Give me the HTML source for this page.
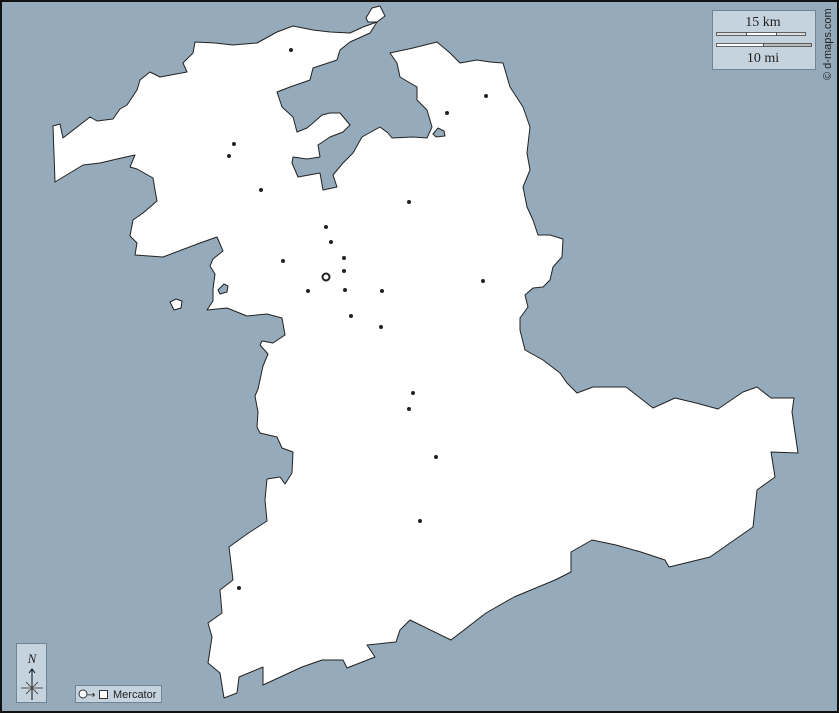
<!DOCTYPE html>
<html><head><meta charset="utf-8"><style>
html,body{margin:0;padding:0;background:#95abbb;}
svg{display:block;}
</style></head><body>
<svg width="839" height="713" viewBox="0 0 839 713" xmlns="http://www.w3.org/2000/svg">
<rect x="0" y="0" width="839" height="713" fill="#95abbb"/>
<g fill="#ffffff" stroke="#222" stroke-width="1" stroke-linejoin="round">
<polygon points="53,126 60,124 63,138 90,117 97,121 113,119 120,109 127,105 137,90 140,80 150,72 160,77 187,72 183,63 193,53 195,42 215,43 233,45 257,43 277,32 293,26 313,30 330,32 350,33 363,27 377,22 370,33 350,42 340,50 337,60 313,68 310,80 290,87 277,92 282,107 293,117 297,132 307,128 313,123 322,115 330,113 340,113 350,125 343,132 330,137 318,145 320,157 307,159 293,157 292,163 298,177 320,173 323,190 337,187 333,175 343,163 353,153 362,137 380,127 388,133 392,138 413,137 427,138 432,127 427,110 417,100 417,87 400,77 397,63 390,53 413,48 437,42 450,53 460,63 477,60 490,62 503,63 510,87 523,107 530,127 527,153 530,170 523,187 527,207 533,220 538,235 550,235 563,239 562,257 553,267 550,280 543,287 533,288 525,295 528,307 520,318 520,330 525,350 543,360 560,373 567,383 577,393 593,387 626,387 653,408 675,398 696,403 718,409 743,392 757,387 771,398 794,398 792,412 798,453 771,452 775,477 757,490 753,527 730,543 710,557 669,567 665,560 641,552 616,545 592,540 571,552 571,572 555,580 514,597 486,613 451,640 410,620 400,630 396,642 367,645 375,657 347,668 343,660 322,660 302,667 263,685 263,667 239,677 237,693 224,698 220,673 208,663 212,637 208,623 222,613 220,590 233,580 229,547 247,534 267,521 265,500 267,479 280,477 285,484 292,473 293,452 282,448 277,437 260,433 257,427 258,412 255,396 258,389 263,366 268,354 260,345 262,341 273,343 285,335 282,318 267,314 247,316 227,308 207,310 213,301 213,289 215,274 210,266 213,259 223,251 217,237 200,243 163,257 135,255 137,243 130,236 133,220 143,213 157,201 155,190 153,178 137,169 130,167 135,155 117,159 100,163 83,165 55,182"/>
<polygon points="366,18 372,8 380,6 385,16 377,22 368,22"/>
<polygon points="170,302 176,299 182,301 181,308 174,310"/>
</g>
<g fill="#95abbb" stroke="#222" stroke-width="1">
<polygon points="433,134 438,128 444,131 445,136 436,137"/>
<polygon points="218,290 224,284 228,286 227,292 220,294"/>
</g>
<g fill="#222">
<circle cx="291" cy="50" r="2"/><circle cx="486" cy="96" r="2"/><circle cx="447" cy="113" r="2"/>
<circle cx="234" cy="144" r="2"/><circle cx="229" cy="156" r="2"/><circle cx="261" cy="190" r="2"/>
<circle cx="409" cy="202" r="2"/><circle cx="326" cy="227" r="2"/><circle cx="331" cy="242" r="2"/>
<circle cx="344" cy="258" r="2"/><circle cx="283" cy="261" r="2"/><circle cx="344" cy="271" r="2"/>
<circle cx="483" cy="281" r="2"/><circle cx="308" cy="291" r="2"/><circle cx="345" cy="290" r="2"/>
<circle cx="382" cy="291" r="2"/><circle cx="351" cy="316" r="2"/><circle cx="381" cy="327" r="2"/>
<circle cx="413" cy="393" r="2"/><circle cx="409" cy="409" r="2"/><circle cx="436" cy="457" r="2"/>
<circle cx="420" cy="521" r="2"/><circle cx="239" cy="588" r="2"/>
</g>
<circle cx="326" cy="277" r="3.5" fill="none" stroke="#222" stroke-width="2"/>
<!-- scale box -->
<rect x="712.5" y="10.5" width="103" height="59" fill="#c4d3dd" stroke="#6f8494"/>
<text x="763" y="26" font-family="Liberation Serif, serif" font-size="14" text-anchor="middle" fill="#222">15 km</text>
<rect x="716.5" y="32.5" width="30" height="3" fill="#dcdcdc" stroke="#444" stroke-width="0.8"/>
<rect x="746.5" y="32.5" width="30" height="3" fill="#fff" stroke="#444" stroke-width="0.8"/>
<rect x="776.5" y="32.5" width="29" height="3" fill="#dcdcdc" stroke="#444" stroke-width="0.8"/>
<rect x="716.5" y="43.5" width="47" height="3" fill="#fff" stroke="#444" stroke-width="0.8"/>
<rect x="763.5" y="43.5" width="48" height="3" fill="#bbbbbb" stroke="#444" stroke-width="0.8"/>
<text x="763" y="62" font-family="Liberation Serif, serif" font-size="14" text-anchor="middle" fill="#222">10 mi</text>
<text transform="translate(831,80) rotate(-90)" font-family="Liberation Sans, sans-serif" font-size="11" fill="#222">© d-maps.com</text>
<!-- north -->
<rect x="16.5" y="643.5" width="30" height="59" fill="#c4d3dd" stroke="#6f8494"/>
<text x="32" y="663" font-family="Liberation Serif, serif" font-style="italic" font-size="13" text-anchor="middle" fill="#222">N</text>
<line x1="32" y1="670" x2="32" y2="700" stroke="#111" stroke-width="1"/>
<polyline points="29,673 32,669 35,673" fill="none" stroke="#111"/>
<line x1="21" y1="688" x2="43" y2="688" stroke="#555"/>
<line x1="26" y1="682" x2="38" y2="694" stroke="#555"/>
<line x1="38" y1="682" x2="26" y2="694" stroke="#555"/>
<!-- mercator -->
<rect x="75.5" y="685.5" width="86" height="17" fill="#c4d3dd" stroke="#6f8494"/>
<circle cx="83" cy="694" r="4" fill="#fff" stroke="#333"/>
<text x="87" y="698" font-family="DejaVu Sans, sans-serif" font-size="10" fill="#222">→</text>
<rect x="99.5" y="690.5" width="8" height="8" fill="#fff" stroke="#333"/>
<text x="113" y="698" font-family="Liberation Sans, sans-serif" font-size="11" fill="#222">Mercator</text>
<rect x="1" y="1" width="837" height="711" fill="none" stroke="#111" stroke-width="2"/>
</svg>
</body></html>
